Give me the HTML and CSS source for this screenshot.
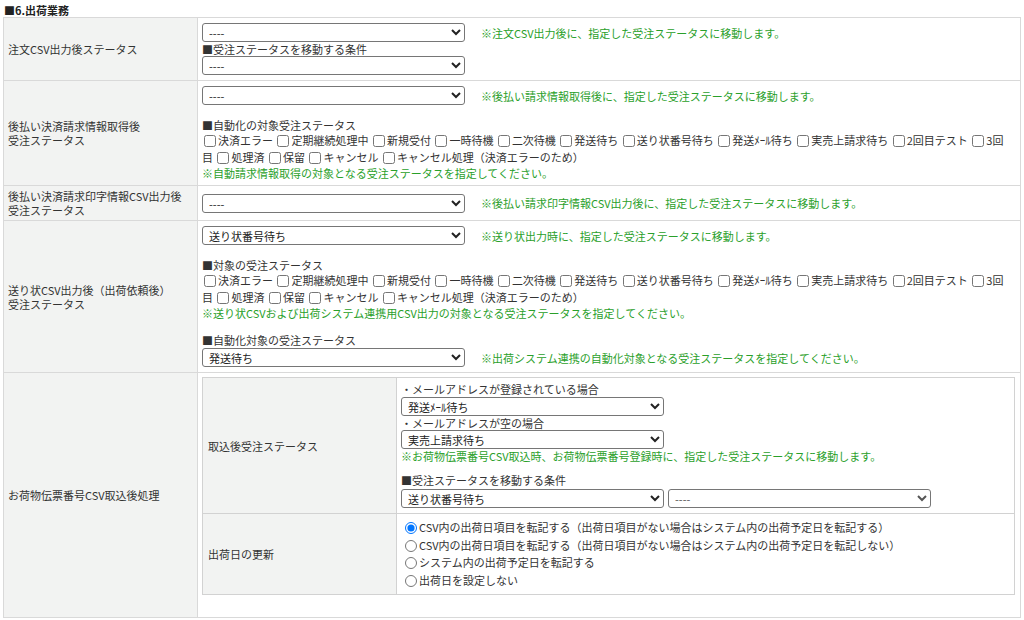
FILE: index.html
```html
<!DOCTYPE html>
<html lang="ja">
<head>
<meta charset="utf-8">
<title>出荷業務</title>
<link rel="stylesheet" href="styles.css">
</head>
<body>
<h2 class="sec-title">■6.出荷業務</h2>
<table class="form">
  <tr class="r1">
    <th>注文CSV出力後ステータス</th>
    <td>
      <div class="sel-row"><select class="sel"><option>----</option></select><span class="note">※注文CSV出力後に、指定した受注ステータスに移動します。</span></div>
      <div class="txt">■受注ステータスを移動する条件</div>
      <div class="sel-row"><select class="sel"><option>----</option></select></div>
    </td>
  </tr>
  <tr class="r2">
    <th>後払い決済請求情報取得後<br>受注ステータス</th>
    <td>
      <div class="sel-row"><select class="sel"><option>----</option></select><span class="note">※後払い請求情報取得後に、指定した受注ステータスに移動します。</span></div>
      <div class="txt gap">■自動化の対象受注ステータス</div>
      <div class="checks"><label class="ck"><input type="checkbox">決済エラー</label> <label class="ck"><input type="checkbox">定期継続処理中</label> <label class="ck"><input type="checkbox">新規受付</label> <label class="ck"><input type="checkbox">一時待機</label> <label class="ck"><input type="checkbox">二次待機</label> <label class="ck"><input type="checkbox">発送待ち</label> <label class="ck"><input type="checkbox">送り状番号待ち</label> <label class="ck"><input type="checkbox">発送ﾒｰﾙ待ち</label> <label class="ck"><input type="checkbox">実売上請求待ち</label> <label class="ck"><input type="checkbox">2回目テスト</label> <label class="ck"><input type="checkbox">3回</label></div>
      <div class="checks">目 <label class="ck"><input type="checkbox">処理済</label> <label class="ck"><input type="checkbox">保留</label> <label class="ck"><input type="checkbox">キャンセル</label> <label class="ck"><input type="checkbox">キャンセル処理（決済エラーのため）</label></div>
      <div class="note-line">※自動請求情報取得の対象となる受注ステータスを指定してください。</div>
    </td>
  </tr>
  <tr class="r3">
    <th>後払い決済請求印字情報CSV出力後<br>受注ステータス</th>
    <td>
      <div class="sel-row"><select class="sel"><option>----</option></select><span class="note">※後払い請求印字情報CSV出力後に、指定した受注ステータスに移動します。</span></div>
    </td>
  </tr>
  <tr class="r4">
    <th>送り状CSV出力後（出荷依頼後）<br>受注ステータス</th>
    <td>
      <div class="sel-row"><select class="sel"><option>送り状番号待ち</option></select><span class="note">※送り状出力時に、指定した受注ステータスに移動します。</span></div>
      <div class="txt gap">■対象の受注ステータス</div>
      <div class="checks"><label class="ck"><input type="checkbox">決済エラー</label> <label class="ck"><input type="checkbox">定期継続処理中</label> <label class="ck"><input type="checkbox">新規受付</label> <label class="ck"><input type="checkbox">一時待機</label> <label class="ck"><input type="checkbox">二次待機</label> <label class="ck"><input type="checkbox">発送待ち</label> <label class="ck"><input type="checkbox">送り状番号待ち</label> <label class="ck"><input type="checkbox">発送ﾒｰﾙ待ち</label> <label class="ck"><input type="checkbox">実売上請求待ち</label> <label class="ck"><input type="checkbox">2回目テスト</label> <label class="ck"><input type="checkbox">3回</label></div>
      <div class="checks">目 <label class="ck"><input type="checkbox">処理済</label> <label class="ck"><input type="checkbox">保留</label> <label class="ck"><input type="checkbox">キャンセル</label> <label class="ck"><input type="checkbox">キャンセル処理（決済エラーのため）</label></div>
      <div class="note-line">※送り状CSVおよび出荷システム連携用CSV出力の対象となる受注ステータスを指定してください。</div>
      <div class="txt gap">■自動化対象の受注ステータス</div>
      <div class="sel-row tight"><select class="sel"><option>発送待ち</option></select><span class="note">※出荷システム連携の自動化対象となる受注ステータスを指定してください。</span></div>
    </td>
  </tr>
  <tr class="r5">
    <th>お荷物伝票番号CSV取込後処理</th>
    <td>
      <table class="inner">
        <tr class="i1">
          <th>取込後受注ステータス</th>
          <td>
            <div class="txt">・メールアドレスが登録されている場合</div>
            <div class="sel-row tight"><select class="sel"><option>発送ﾒｰﾙ待ち</option></select></div>
            <div class="txt">・メールアドレスが空の場合</div>
            <div class="sel-row"><select class="sel"><option>実売上請求待ち</option></select></div>
            <div class="note-line">※お荷物伝票番号CSV取込時、お荷物伝票番号登録時に、指定した受注ステータスに移動します。</div>
            <div class="txt gap3">■受注ステータスを移動する条件</div>
            <div class="sel-row pair"><select class="sel"><option>送り状番号待ち</option></select><select class="sel faint"><option>----</option></select></div>
          </td>
        </tr>
        <tr class="i2">
          <th>出荷日の更新</th>
          <td>
            <div class="radios">
              <label class="rd"><input type="radio" name="shipdate" checked>CSV内の出荷日項目を転記する（出荷日項目がない場合はシステム内の出荷予定日を転記する）</label>
              <label class="rd"><input type="radio" name="shipdate">CSV内の出荷日項目を転記する（出荷日項目がない場合はシステム内の出荷予定日を転記しない）</label>
              <label class="rd"><input type="radio" name="shipdate">システム内の出荷予定日を転記する</label>
              <label class="rd"><input type="radio" name="shipdate">出荷日を設定しない</label>
            </div>
          </td>
        </tr>
      </table>
    </td>
  </tr>
</table>
</body>
</html>
```
FILE: styles.css
```css
* { box-sizing: border-box; }

html, body { background: #ffffff; }

body {
  margin: 0;
  padding: 3px 3px 0 3px;
  font-family: "Noto Sans CJK JP", "Noto Sans", sans-serif;
  font-size: 11px;
  line-height: 14px;
  color: #333333;
}

.sec-title {
  margin: 0 0 0 1px;
  font-size: 11px;
  line-height: 14px;
  font-weight: bold;
  color: #222222;
}

table.form {
  border-collapse: collapse;
  table-layout: fixed;
  width: 1018px;
}

.form > tbody > tr > th,
.form > tbody > tr > td {
  border: 1px solid #d9d9d9;
}

.form > tbody > tr > th {
  width: 194px;
  padding: 3px 5px 3px 4px;
  background: #f2f3f2;
  font-weight: normal;
  text-align: left;
  vertical-align: middle;
}

.form > tbody > tr > td {
  padding: 5px 4px 5px 4px;
  vertical-align: middle;
}

.form > tbody > tr.r5 > td {
  padding: 4px 4px 5px 4px;
  vertical-align: top;
}

.sel-row {
  display: flex;
  align-items: center;
  height: 19px;
}

.sel-row.tight { margin-top: 1px; }

.sel-row.pair { margin-top: 2px; gap: 4px; }

.sel {
  width: 263px;
  height: 19px;
  padding: 0 2px;
  font-family: inherit;
  font-size: 11px;
  color: #222222;
  background: #ffffff;
  border: 1px solid #767676;
  border-radius: 3px;
}

.sel.faint { color: #555555; }

.note {
  margin-left: 16px;
  color: #2aa02a;
  white-space: nowrap;
}

.note-line {
  color: #2aa02a;
  white-space: nowrap;
}

.txt { white-space: nowrap; }

.txt.gap { margin-top: 13px; }
.txt.gap3 { margin-top: 10px; }

.checks {
  line-height: 17px;
  white-space: nowrap;
}

.ck input {
  width: 12px;
  height: 12px;
  margin: 0 2px 0 2px;
  vertical-align: -2px;
}

table.inner {
  border-collapse: collapse;
  table-layout: fixed;
  width: 813px;
  margin-bottom: 17px;
}

.inner th,
.inner td {
  border: 1px solid #d2d2d2;
}

.inner th {
  width: 194px;
  padding: 0 5px;
  background: #f2f3f2;
  font-weight: normal;
  text-align: left;
  vertical-align: middle;
}

.inner td {
  padding: 4px 4px 5px 4px;
  vertical-align: top;
}

.inner tr.i2 td { padding: 5px 4px 5px 4px; }

.radios {
  display: flex;
  flex-direction: column;
}

.rd {
  display: block;
  line-height: 17.5px;
  white-space: nowrap;
}

.rd input {
  width: 12px;
  height: 12px;
  margin: 0 2px 0 4px;
  vertical-align: -2px;
}
```
